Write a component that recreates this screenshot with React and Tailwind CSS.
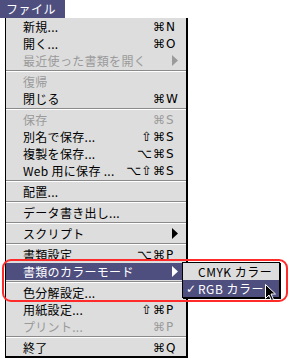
import React from "react";

const HL = "bg-[#4f4f7f]";

const items = [
  { label: "新規...", key: "N" },
  { label: "開く...", key: "O" },
  { label: "最近使った書類を開く", disabled: true, sub: true },
  "sep",
  { label: "復帰", disabled: true },
  { label: "閉じる", key: "W" },
  "sep",
  { label: "保存", key: "S", disabled: true },
  { label: "別名で保存...", mods: "⇧", key: "S" },
  { label: "複製を保存...", mods: "⌥", key: "S" },
  { label: "Web 用に保存 ...", mods: "⌥⇧", key: "S" },
  "sep",
  { label: "配置..." },
  "sep",
  { label: "データ書き出し..." },
  "sep",
  { label: "スクリプト", sub: true },
  "sep",
  { label: "書類設定", mods: "⌥", key: "P" },
  { label: "書類のカラーモード", sub: true, active: true },
  "sep",
  { label: "色分解設定..." },
  { label: "用紙設定...", mods: "⇧", key: "P" },
  { label: "プリント...", key: "P", disabled: true },
  "sep",
  { label: "終了", key: "Q" },
];

function Arrow({ color }) {
  return (
    <svg width="6" height="11" viewBox="0 0 6 11">
      <polygon points="0,0 6,5.5 0,11" fill={color} />
    </svg>
  );
}

function Row({ item }) {
  const color = item.active
    ? "text-white"
    : item.disabled
    ? "text-[#9a9a9a]"
    : "text-black";
  return (
    <div
      className={`flex items-center h-[17px] pl-[17px] ${color} ${
        item.active ? HL : ""
      }`}
    >
      <span className="flex-1 whitespace-nowrap leading-none tracking-[0.3px]">
        {item.label}
      </span>
      <span className="flex items-center leading-none font-['DejaVu_Sans',sans-serif] text-[12px]">
        {item.mods && <span className="text-[13px]">{item.mods}</span>}
        <span className="w-[34px] pl-[1px] flex items-center">
          {item.key && (
            <span>
              ⌘<span className="pl-[1px]">{item.key}</span>
            </span>
          )}
          {item.sub && (
            <span className="ml-auto mr-[8px] flex">
              <Arrow
                color={
                  item.active ? "#ffffff" : item.disabled ? "#9a9a9a" : "#000000"
                }
              />
            </span>
          )}
        </span>
      </span>
    </div>
  );
}

function Sep() {
  return (
    <div className="h-[4px] flex flex-col justify-center">
      <div className="h-px bg-[#8a8a8a]" />
      <div className="h-px bg-white" />
    </div>
  );
}

export default function App() {
  return (
    <div className="relative w-[290px] h-[358px] bg-white overflow-hidden text-[12px] font-['Noto_Sans_CJK_JP',sans-serif]">
      <div
        className={`w-[65px] h-[18px] ${HL} text-white flex items-center pl-[6px] leading-none tracking-[0.5px]`}
      >
        ファイル
      </div>
      <div className="ml-[5px] w-[183px] bg-[#dddddd] border-l border-r-2 border-b-2 border-black">
        {items.map((it, i) =>
          it === "sep" ? <Sep key={i} /> : <Row key={i} item={it} />
        )}
      </div>

      <div className="absolute left-[182px] top-[262px] w-[98px] bg-[#dddddd] border border-black shadow-[1px_1px_0_#000]">
        <div className="h-[17px] flex items-center pl-[15px] leading-none text-black tracking-[0.5px]">
          CMYK カラー
        </div>
        <div
          className={`h-[17px] flex items-center pl-[3px] leading-none text-white tracking-[0.5px] ${HL}`}
        >
          <span className="w-[12px] font-['DejaVu_Sans',sans-serif] text-[12px]">✓</span>
          RGB カラー
        </div>
      </div>

      <svg
        className="absolute left-[265px] top-[284px]"
        width="12"
        height="18"
        viewBox="0 0 12 18"
      >
        <path
          d="M0.5,0.5 L0.5,14.5 L4,11 L6.5,16.5 L8.5,15.5 L6,10 L10.5,10 Z"
          fill="#000"
          stroke="#fff"
          strokeWidth="1"
        />
      </svg>

      <div className="absolute left-[2px] top-[259px] w-[286px] h-[43px] border-2 border-[#ff2a2a] rounded-[9px]" />
    </div>
  );
}
